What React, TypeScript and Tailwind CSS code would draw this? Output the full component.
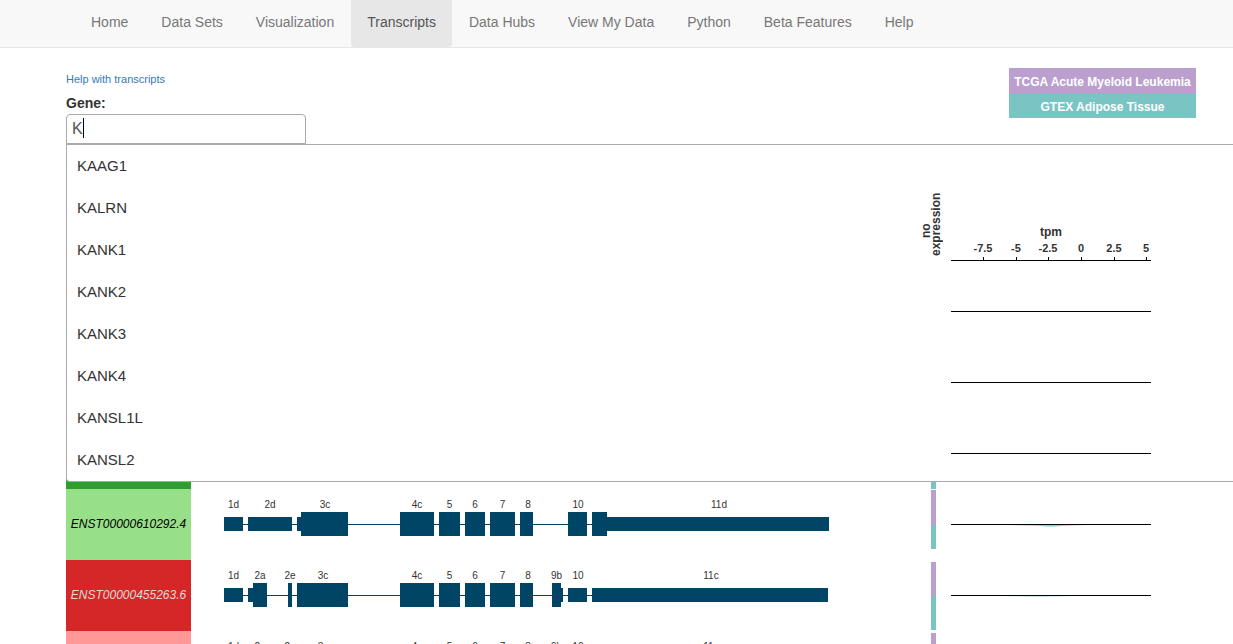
import React, { useState } from "react";

const NAV = ["Home", "Data Sets", "Visualization", "Transcripts", "Data Hubs", "View My Data", "Python", "Beta Features", "Help"];
const GENES = ["KAAG1", "KALRN", "KANK1", "KANK2", "KANK3", "KANK4", "KANSL1L", "KANSL2"];

type Exon = { label?: string; x: number; w: number; tall?: boolean; at?: number };
type Row = {
  id?: string;
  style: string;
  exons: Exon[];
  end: number;
  upper: number;
  lower: number;
  density?: string;
};

const MIDDLE: Exon[] = [
  { label: "4c", x: 176, w: 34, tall: true },
  { label: "5", x: 215, w: 21, tall: true },
  { label: "6", x: 241, w: 20, tall: true },
  { label: "7", x: 266, w: 25, tall: true },
  { label: "8", x: 296, w: 13, tall: true, at: 304 },
];

const EXONS_D: Exon[] = [
  { label: "1d", x: 0, w: 19 },
  { label: "2d", x: 24, w: 44 },
  { x: 73, w: 4 },
  { label: "3c", x: 77, w: 47, tall: true, at: 101 },
  ...MIDDLE,
  { label: "10", x: 344, w: 19, tall: true, at: 354 },
  { x: 368, w: 15, tall: true },
  { label: "11d", x: 383, w: 222, at: 495 },
];

const EXONS_C: Exon[] = [
  { label: "1d", x: 0, w: 19 },
  { x: 24, w: 5 },
  { label: "2a", x: 29, w: 14, tall: true, at: 36 },
  { label: "2e", x: 64, w: 4, tall: true },
  { label: "3c", x: 73, w: 51, tall: true, at: 99 },
  ...MIDDLE,
  { label: "9b", x: 328, w: 9, tall: true },
  { x: 337, w: 2 },
  { label: "10", x: 344, w: 19, at: 354 },
  { label: "11c", x: 368, w: 236, at: 487 },
];

const ROWS: Row[] = [
  { style: "", exons: [], end: 0, upper: 0, lower: 0 },
  { style: "", exons: [], end: 0, upper: 0, lower: 0 },
  { style: "bg-[#2ca02c] text-white", exons: [], end: 0, upper: 34, lower: 35 },
  {
    id: "ENST00000610292.4", style: "bg-[#98df8a] text-black", exons: EXONS_D, end: 605, upper: 35, lower: 24,
    density: "M55 36 Q78 36.4 90 37 Q100 38.6 110 37 Q118 36.4 138 36 Z",
  },
  {
    id: "ENST00000455263.6", style: "bg-[#d62728] text-[#e0d8d8]", exons: EXONS_C, end: 604, upper: 34, lower: 34,
    density: "M50 36 Q75 36.3 90 36.5 Q102 36.4 118 36 Z",
  },
  { style: "bg-[#ff9896] text-black", exons: EXONS_C, end: 604, upper: 34, lower: 34 },
];

const TICKS = [
  { label: "-7.5", x: 32 },
  { label: "-5", x: 65 },
  { label: "-2.5", x: 97 },
  { label: "0", x: 130 },
  { label: "2.5", x: 163 },
  { label: "5", x: 195 },
];

function Exons({ row }: { row: Row }) {
  return (
    <svg width="630" height="71" className="shrink-0" fill="#004466" shapeRendering="crispEdges" aria-hidden="true">
      <rect x="0" y="35" width={row.end} height="1" />
      {row.exons.map((e) => (
        <g key={e.x}>
          <rect x={e.x} y={e.tall ? 23 : 28} width={e.w} height={e.tall ? 24 : 14} />
          {e.label && (
            <text x={e.at ?? e.x + e.w / 2} y="19" textAnchor="middle" fontSize="10" fill="#333">
              {e.label}
            </text>
          )}
        </g>
      ))}
    </svg>
  );
}

function TranscriptRow({ row }: { row: Row }) {
  return (
    <div className="flex h-[71px] shrink-0">
      <div className={`flex w-[125px] shrink-0 items-center justify-center pb-0.5 text-xs italic ${row.style}`}>{row.id}</div>
      <div className="ml-[33px] flex w-[707px] shrink-0">
        <Exons row={row} />
      </div>
      <svg width="5" height="71" className="shrink-0" aria-hidden="true">
        <rect x="0" y={36 - row.upper} width="5" height={row.upper} fill="#ba9fcf" />
        <rect x="0" y="36" width="5" height={row.lower} fill="#7ac5c4" />
      </svg>
      <svg width="200" height="71" className="relative z-20 ml-[15px] shrink-0" aria-hidden="true">
        {row.density && <path d={row.density} fill="#7ac5c4" fillOpacity="0.8" />}
        <rect x="0" y="35" width="200" height="1" fill="#000" />
      </svg>
    </div>
  );
}

export default function App() {
  const [gene, setGene] = useState("K");
  return (
    <div className="flex h-screen flex-col overflow-hidden bg-white font-['Liberation_Sans',Arial,sans-serif] text-[#333]">
      <nav className="flex h-12 shrink-0 gap-px border-b border-[#e7e7e7] bg-[#f8f8f8] pl-[75px] text-sm leading-5">
        {NAV.map((item) => (
          <a
            key={item}
            href="#"
            className={
              item === "Transcripts"
                ? "rounded-b bg-[#e7e7e7] px-4 pt-3 text-[#555]"
                : "px-4 pt-3 text-[#777]"
            }
          >
            {item}
          </a>
        ))}
      </nav>

      <main className="flex flex-col pl-[66px]">
        <header className="relative flex h-24 shrink-0 items-start justify-between pt-5 pr-[37px]">
          <div className="flex flex-col items-start">
            <a href="#" className="pt-[3px] text-[11px] leading-4 text-[#337ab7]">Help with transcripts</a>
            <label htmlFor="gene" className="mt-[5px] h-[22px] pt-px text-sm leading-5 font-bold">Gene:</label>
            <div className="relative">
              <input
                id="gene"
                value={gene}
                onChange={(e) => setGene(e.target.value)}
                autoComplete="off"
                className="block h-[30px] w-60 rounded-t border border-[#aaa] bg-white px-[5px] text-base leading-5 text-[#555] outline-none"
              />
              <span className="absolute top-1 left-[17px] h-5 w-px bg-black" />
            </div>
          </div>
          <div className="w-[187px] text-center text-xs font-bold text-white">
            <div className="bg-[#ba9fcf] pt-0.5 leading-6">TCGA Acute Myeloid Leukemia</div>
            <div className="bg-[#7ac5c4] pt-0.5 leading-[22px]">GTEX Adipose Tissue</div>
          </div>
          <ul className="absolute top-full right-0 left-0 z-10 rounded-bl border-y border-l border-[#aaa] bg-white text-[15px]">
            {GENES.map((g) => (
              <li key={g}>
                <button type="button" onClick={() => setGene(g)} className="block h-[42px] w-full px-2.5 text-left">
                  {g}
                </button>
              </li>
            ))}
          </ul>
        </header>

        <section className="flex flex-col">
          <div className="flex h-[132px] shrink-0 items-end pb-[15px]">
            <div className="relative z-20 mb-[5px] ml-[855px] h-16 w-5 shrink-0 rotate-180 text-xs leading-[10px] font-bold [writing-mode:vertical-rl]">
              <div className="pt-[18px]">no</div>
              <div>expression</div>
            </div>
            <svg width="200" height="40" className="relative z-20 ml-[10px] shrink-0" fontWeight="bold" fill="#333">
              <text x="100" y="15" textAnchor="middle" fontSize="12">tpm</text>
              {TICKS.map((t) => (
                <g key={t.label}>
                  <text x={t.x} y="31" textAnchor="middle" fontSize="11">{t.label}</text>
                  <rect x={t.x} y="36" width="1" height="4" fill="#000" />
                </g>
              ))}
              <rect x="0" y="39" width="200" height="1" fill="#000" />
            </svg>
          </div>
          {ROWS.map((row, i) => (
            <TranscriptRow key={i} row={row} />
          ))}
        </section>
      </main>
    </div>
  );
}
